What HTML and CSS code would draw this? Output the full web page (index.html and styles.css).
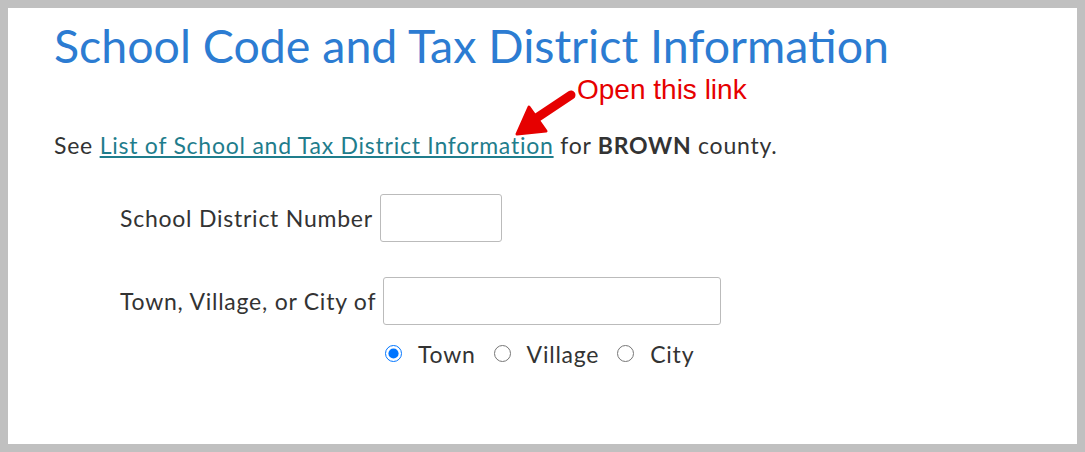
FILE: index.html
```html
<!DOCTYPE html>
<html lang="en">
<head>
    <meta charset="UTF-8">
    <title>School Code and Tax District Information</title>
    <link rel="stylesheet" href="styles.css">
</head>
<body>
    <div class="page">
        <h1 class="title">School Code and Tax District Information</h1>

        <!-- Link to district list -->
        <p class="intro">
            See <a href="#" class="district-link">List of School and Tax District Information</a> for <b>BROWN</b> county.
        </p>

        <!-- Annotation over the link -->
        <svg class="note-arrow" width="70" height="56" viewBox="0 0 70 56">
            <path d="M25 34 L61 10" stroke="#e60000" stroke-width="9" stroke-linecap="round" fill="none"/>
            <path d="M7 49 L19 22 L36 46 Z" fill="#e60000" stroke="#e60000" stroke-width="3" stroke-linejoin="round"/>
        </svg>
        <span class="note-text">Open this link</span>

        <div class="form">
            <div class="row">
                <label class="row-label">School District Number</label>
                <input type="text" class="field field-small">
            </div>
            <div class="row row-town">
                <label class="row-label">Town, Village, or City of</label>
                <input type="text" class="field field-wide">
            </div>
            <div class="radios">
                <label class="radio"><input type="radio" name="kind" checked> Town</label>
                <label class="radio"><input type="radio" name="kind"> Village</label>
                <label class="radio"><input type="radio" name="kind"> City</label>
            </div>
        </div>
    </div>
</body>
</html>
```

FILE: styles.css
```css
/* Page frame */
body {
    margin: 0;
    padding: 8px;
    background: #c0c0c0;
    font-family: Lato, "Open Sans", sans-serif;
    color: #333;
}
.page {
    background: #fff;
    height: 436px;
    box-sizing: border-box;
    padding: 10px 46px 0;
    position: relative;
}

/* Heading */
.title {
    margin: 0;
    font-size: 46.5px;
    font-weight: 400;
    color: #2c7cd2;
    line-height: 1.2;
}

/* Intro line */
.intro {
    margin: 57px 0 0;
    font-size: 23px;
    letter-spacing: 0.76px;
}
.district-link {
    color: #1f7d8c;
}

/* Red annotation */
.note-arrow {
    position: absolute;
    left: 502px;
    top: 77px;
}
.note-text {
    position: absolute;
    left: 569px;
    top: 66px;
    font-family: "Liberation Sans", Arial, sans-serif;
    font-size: 28px;
    color: #e60000;
    white-space: nowrap;
}

/* Form rows */
.form {
    margin-top: 35px;
    padding-left: 66px;
    font-size: 23px;
    letter-spacing: 0.76px;
}
.row {
    display: flex;
    align-items: center;
    gap: 7px;
}
.row-town {
    margin-top: 35px;
}
.field {
    height: 48px;
    box-sizing: border-box;
    border: 1px solid #bbb;
    border-radius: 3px;
    font-size: 18px;
}
.field-small {
    width: 122px;
}
.field-wide {
    width: 338px;
}
.radios {
    display: flex;
    gap: 18px;
    margin: 15px 0 0 265px;
}
.radio {
    display: flex;
    align-items: center;
    gap: 16px;
}
.radio input {
    margin: 0;
    width: 17px;
    height: 17px;
}
```
